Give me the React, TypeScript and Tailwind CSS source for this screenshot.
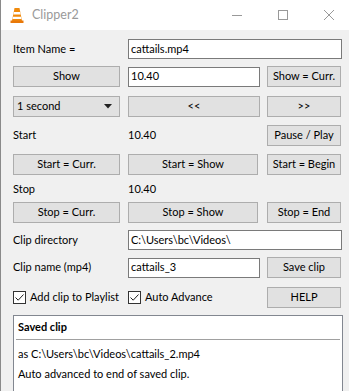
import React from "react";

const font = { fontFamily: 'Lato, "Segoe UI", sans-serif' };

function Btn({ children, w, cls = "" }: { children: React.ReactNode; w: string; cls?: string }) {
  return (
    <div className={`${w} h-[21px] bg-[#e1e1e1] border border-[#adadad] flex items-center justify-center text-[11px] text-black shrink-0 whitespace-nowrap ${cls}`}>
      {children}
    </div>
  );
}

function Input({ children, w }: { children: React.ReactNode; w: string }) {
  return (
    <div className={`${w} h-[20px] bg-white border border-[#7a7a7a] flex items-center pl-[2px] text-[11px] text-black shrink-0 overflow-hidden whitespace-nowrap`}>
      {children}
    </div>
  );
}

function Check({ label }: { label: string }) {
  return (
    <div className="flex items-center gap-[4px] whitespace-nowrap">
      <div className="w-[13px] h-[13px] border border-[#333] bg-white flex items-center justify-center shrink-0">
        <svg width="11" height="11" viewBox="0 0 11 11">
          <path d="M1.5 5.5 L4.2 8.2 L9.5 2.5" fill="none" stroke="#222" strokeWidth="1" />
        </svg>
      </div>
      <span className="text-[11px]">{label}</span>
    </div>
  );
}

export default function App() {
  return (
    <div className="w-[349px] h-[391px] overflow-hidden bg-[#f0f0f0] border-l border-[#8a8a8a] flex flex-col text-black" style={font}>
      {/* title bar */}
      <div className="h-[30px] bg-white flex items-center shrink-0">
        <svg className="ml-[9px]" width="14" height="17" viewBox="0 0 14 17">
          <path d="M4.5 1 L9.5 1 L12 14 L2 14 Z" fill="#f08a0c" />
          <path d="M3.9 5 L10.1 5 L10.6 7.6 L3.4 7.6 Z" fill="#ffffff" />
          <path d="M3 9.8 L11 9.8 L11.4 12 L2.6 12 Z" fill="#ffffff" />
          <path d="M0.5 13.5 L13.5 13.5 L13.5 16 L0.5 16 Z" fill="#e8780a" />
        </svg>
        <span className="ml-[8px] text-[12.5px] text-[#9a9a9a]">Clipper2</span>
        <div className="flex-1" />
        <svg width="12" height="12" viewBox="0 0 12 12" className="mr-[34px]">
          <path d="M1 6.5 H11" stroke="#999" strokeWidth="1" />
        </svg>
        <svg width="12" height="12" viewBox="0 0 12 12" className="mr-[34px]">
          <rect x="1.5" y="1.5" width="9" height="9" fill="none" stroke="#999" strokeWidth="1" />
        </svg>
        <svg width="12" height="12" viewBox="0 0 12 12" className="mr-[14px]">
          <path d="M1 1 L11 11 M11 1 L1 11" stroke="#999" strokeWidth="1" />
        </svg>
      </div>

      <div className="flex flex-col pl-[12px] text-[11px]">
        {/* row 1 */}
        <div className="flex items-center h-[20px] mt-[9px]">
          <div className="w-[115px] shrink-0">Item Name =</div>
          <Input w="w-[214px]">cattails.mp4</Input>
        </div>
        {/* row 2 */}
        <div className="flex items-center h-[21px] mt-[7px]">
          <Btn w="w-[107px]">Show</Btn>
          <div className="w-[8px]" />
          <Input w="w-[132px]">10.40</Input>
          <div className="w-[7px]" />
          <Btn w="w-[74px]">Show = Curr.</Btn>
        </div>
        {/* row 3 */}
        <div className="flex items-center h-[21px] mt-[9px]">
          <div className="w-[107px] h-[21px] bg-[#e1e1e1] border border-[#adadad] flex items-center justify-between pl-[3px] pr-[7px]">
            <span>1 second</span>
            <svg width="8" height="5" viewBox="0 0 8 5"><path d="M0 0 H8 L4 4.5 Z" fill="#222" /></svg>
          </div>
          <div className="w-[8px]" />
          <Btn w="w-[132px]">&lt;&lt;</Btn>
          <div className="w-[7px]" />
          <Btn w="w-[74px]">&gt;&gt;</Btn>
        </div>
        {/* row 4 */}
        <div className="flex items-center h-[21px] mt-[8px]">
          <div className="w-[115px] shrink-0">Start</div>
          <div className="w-[139px] shrink-0">10.40</div>
          <Btn w="w-[74px]">Pause / Play</Btn>
        </div>
        {/* row 5 */}
        <div className="flex items-center h-[21px] mt-[8px]">
          <Btn w="w-[107px]">Start = Curr.</Btn>
          <div className="w-[8px]" />
          <Btn w="w-[130px]">Start = Show</Btn>
          <div className="w-[9px]" />
          <Btn w="w-[74px]">Start = Begin</Btn>
        </div>
        {/* row 6 */}
        <div className="flex items-center h-[20px] mt-[4px]">
          <div className="w-[115px] shrink-0">Stop</div>
          <div>10.40</div>
        </div>
        {/* row 7 */}
        <div className="flex items-center h-[21px] mt-[3px]">
          <Btn w="w-[107px]">Stop = Curr.</Btn>
          <div className="w-[8px]" />
          <Btn w="w-[130px]">Stop = Show</Btn>
          <div className="w-[9px]" />
          <Btn w="w-[74px]">Stop = End</Btn>
        </div>
        {/* row 8 */}
        <div className="flex items-center h-[20px] mt-[7px]">
          <div className="w-[115px] shrink-0">Clip directory</div>
          <Input w="w-[214px]">C:\Users\bc\Videos\</Input>
        </div>
        {/* row 9 */}
        <div className="flex items-center h-[21px] mt-[7px]">
          <div className="w-[115px] shrink-0 whitespace-nowrap">Clip name (mp4)</div>
          <Input w="w-[132px]">cattails_3</Input>
          <div className="w-[7px]" />
          <Btn w="w-[74px]">Save clip</Btn>
        </div>
        {/* row 10 */}
        <div className="flex items-center h-[21px] mt-[9px]">
          <div className="w-[115px] shrink-0">
            <Check label="Add clip to Playlist" />
          </div>
          <div className="w-[139px] shrink-0">
            <Check label="Auto Advance" />
          </div>
          <Btn w="w-[74px]">HELP</Btn>
        </div>
        {/* status box */}
        <div className="mt-[7px] w-[330px] h-[90px] bg-white border border-[#828790] flex flex-col shrink-0">
          <div className="h-[23px] flex items-center pl-[4px] font-bold">Saved clip</div>
          <div className="mx-[2px] h-px bg-[#a0a0a0]" />
          <div className="mt-[6px] pl-[4px] leading-[16px]">as C:\Users\bc\Videos\cattails_2.mp4</div>
          <div className="mt-[4px] pl-[4px] leading-[16px]">Auto advanced to end of saved clip.</div>
        </div>
      </div>
    </div>
  );
}
